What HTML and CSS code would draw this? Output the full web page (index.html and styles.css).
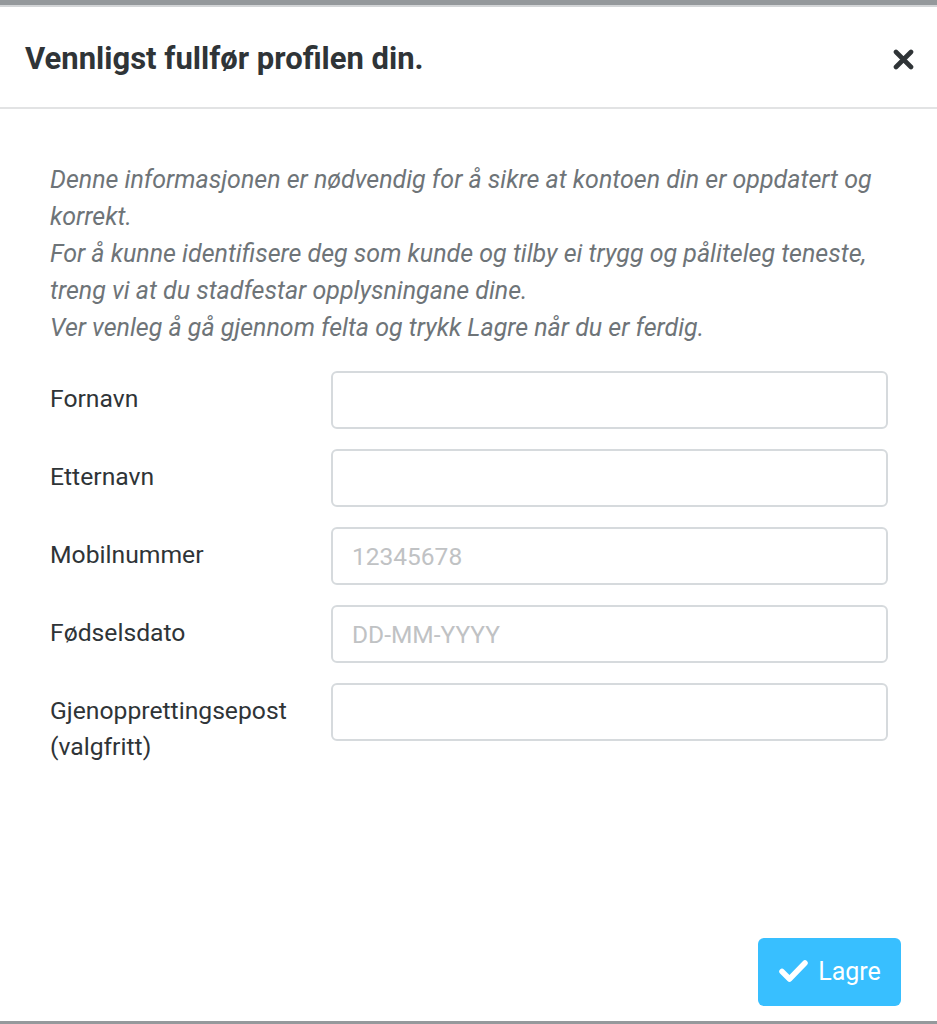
FILE: index.html
```html
<!DOCTYPE html>
<html lang="nb">
<head>
  <meta charset="UTF-8">
  <meta name="viewport" content="width=device-width, initial-scale=1.0">
  <title>Fullfør profilen</title>
  <link rel="stylesheet" href="styles.css">
</head>
<body>

<div class="modal">
  <div class="modal-header">
    <h2>Vennligst fullfør profilen din.</h2>
    <button class="close" aria-label="Lukk">
      <svg width="21" height="21" viewBox="0 0 21 21">
        <path d="M3 3 L18 18 M18 3 L3 18" stroke="#2f3437" stroke-width="4.6" stroke-linecap="round"/>
      </svg>
    </button>
  </div>

  <div class="modal-body">
    <p class="intro">
      Denne informasjonen er nødvendig for å sikre at kontoen din er oppdatert og korrekt.<br>
      For å kunne identifisere deg som kunde og tilby ei trygg og påliteleg teneste, treng vi at du stadfestar opplysningane dine.<br>
      Ver venleg å gå gjennom felta og trykk Lagre når du er ferdig.
    </p>

    <div class="form">
      <div class="row">
        <label for="firstName">Fornavn</label>
        <input type="text" id="firstName">
      </div>
      <div class="row">
        <label for="lastName">Etternavn</label>
        <input type="text" id="lastName">
      </div>
      <div class="row">
        <label for="mobile">Mobilnummer</label>
        <input type="text" id="mobile" placeholder="12345678">
      </div>
      <div class="row">
        <label for="dob">Fødselsdato</label>
        <input type="text" id="dob" placeholder="DD-MM-YYYY">
      </div>
      <div class="row">
        <label for="recovery">Gjenopprettingsepost<br>(valgfritt)</label>
        <input type="email" id="recovery">
      </div>
    </div>
  </div>

  <div class="modal-footer">
    <button class="save">
      <svg width="31" height="26" viewBox="0 0 31 26">
        <path d="M4 13.5 L11.5 21 L27 5" fill="none" stroke="#fff" stroke-width="5.5" stroke-linecap="round" stroke-linejoin="round"/>
      </svg>
      Lagre
    </button>
  </div>
</div>

</body>
</html>
```

FILE: styles.css
```css
html, body {
  height: 100%;
}
body {
  margin: 0;
  background-color: #95999c;
  font-family: Roboto, "Liberation Sans", sans-serif;
  overflow: hidden;
}
.modal {
  height: 1014px;
  margin-top: 5px;
  border-top: 2px solid #d3d5d7;
  background-color: white;
  display: flex;
  flex-direction: column;
}
.modal-header {
  height: 100px;
  border-bottom: 2px solid #e2e3e4;
  display: flex;
  align-items: center;
  justify-content: space-between;
  padding: 0 23px 0 25px;
}
.modal-header h2 {
  margin: 0;
  font-size: 31px;
  font-weight: 700;
  color: #2f3437;
  padding-top: 2px;
}
.close {
  border: none;
  background: none;
  padding: 0;
  display: flex;
  margin-top: 4px;
}
.modal-body {
  flex: 1;
  padding: 52px 49px 0 50px;
}
.intro {
  margin: 0 0 25px;
  font-size: 25px;
  line-height: 37px;
  font-style: italic;
  color: #6e7478;
}
.form {
  display: flex;
  flex-direction: column;
  gap: 20px;
}
.row {
  display: flex;
  align-items: flex-start;
}
.row label {
  width: 281px;
  flex-shrink: 0;
  padding-top: 10px;
  font-size: 24.7px;
  line-height: 36px;
  color: #2f3437;
}
.row input {
  flex: 1;
  height: 58px;
  box-sizing: border-box;
  border: 2px solid #d6dadd;
  border-radius: 6px;
  padding: 0 19px;
  font-family: Roboto, sans-serif;
  font-size: 24.5px;
  color: #333;
}
.row input::placeholder {
  color: #c0c2c4;
}
.modal-footer {
  display: flex;
  justify-content: flex-end;
  padding: 0 36px 15px 0;
}
.save {
  width: 143px;
  height: 68px;
  border: none;
  border-radius: 6px;
  background-color: #38bfff;
  color: white;
  font-family: Roboto, sans-serif;
  font-size: 25px;
  display: flex;
  align-items: center;
  justify-content: center;
  gap: 9px;
  padding: 0 0 2px;
}
```
